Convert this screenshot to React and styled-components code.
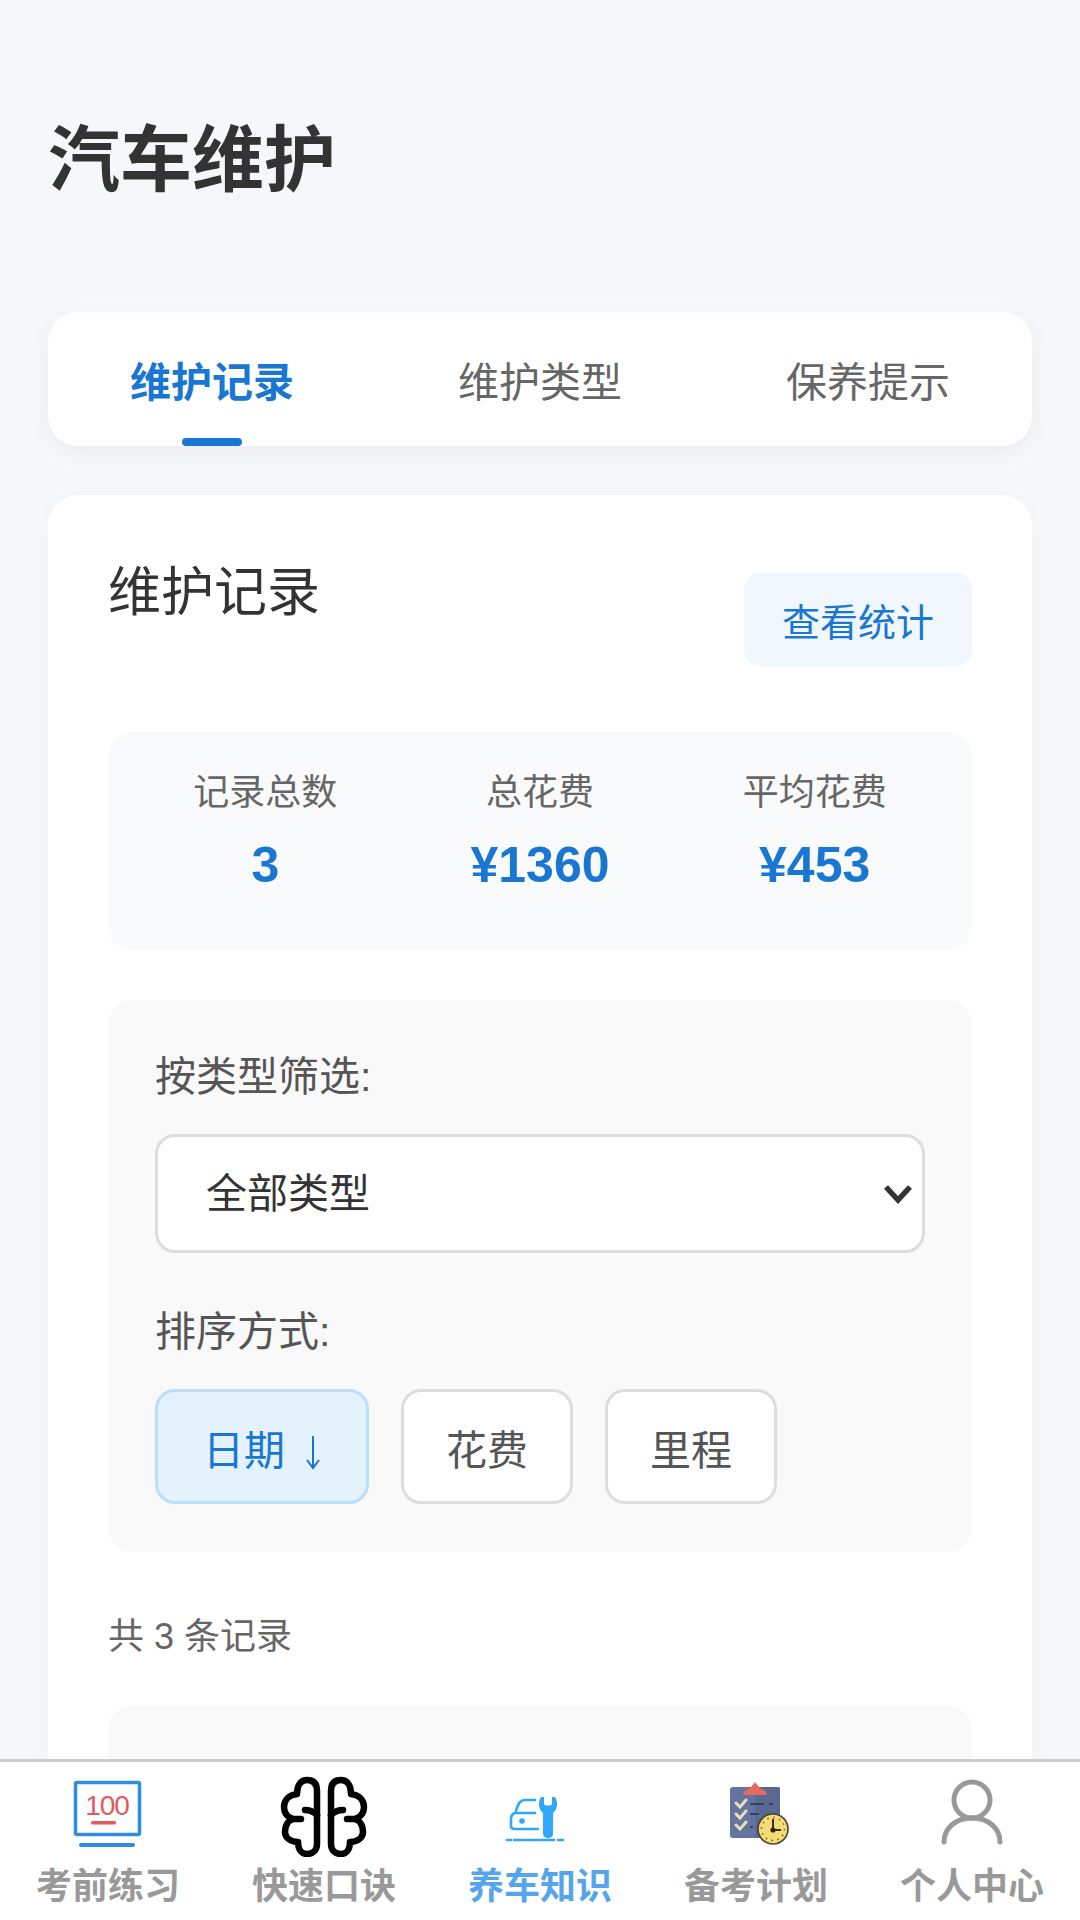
import React from 'react';
import styled, { createGlobalStyle } from 'styled-components';

const Global = createGlobalStyle`
  html, body { margin: 0; padding: 0; height: 1920px; overflow: hidden; background: #f5f7fa; }
  * { box-sizing: border-box; }
  body { font-family: "Liberation Sans", "Noto Sans CJK SC", sans-serif; }
`;

const Screen = styled.div`
  height: 1920px; display: flex; flex-direction: column; overflow: hidden; background: #f5f7fa;
`;
const Scroll = styled.main`
  flex: 1; min-height: 0; overflow: hidden; padding: 0 48px;
`;
const Title = styled.h1`
  margin: 0 0 92px; padding-top: 100px; font-size: 72px; line-height: 120px; font-weight: 700; color: #333;
`;
const Tabs = styled.nav`
  display: grid; grid-template-columns: repeat(3, 1fr); height: 134px; background: #fff;
  border-radius: 30px; box-shadow: 0 6px 24px rgba(0,0,0,.05); margin-bottom: 49px; overflow: hidden;
`;
const Tab = styled.div`
  position: relative; display: flex; align-items: center; justify-content: center; padding-bottom: 0;
  font-size: 41px; color: ${p => (p.$active ? '#1976d2' : '#666')}; font-weight: ${p => (p.$active ? 700 : 400)};
  ${p => p.$active && `&::after { content: ""; position: absolute; bottom: 0; left: 50%; transform: translateX(-50%); width: 60px; height: 8px; border-radius: 4px; background: #1976d2; }`}
`;
const Card = styled.section`
  background: #fff; border-radius: 30px; padding: 60px 60px 0; box-shadow: 0 4px 20px rgba(0,0,0,.03);
`;
const CardHeader = styled.header`
  display: flex; justify-content: space-between; align-items: flex-start; margin-bottom: 66px;
`;
const CardTitle = styled.h2`
  margin: 0; font-size: 53px; line-height: 75px; font-weight: 400; color: #333;
`;
const StatsButton = styled.button`
  margin-top: 18px; width: 228px; height: 93px; border: 0; border-radius: 16px; background: #f0f7ff;
  color: #1976d2; font: inherit; font-size: 38px;
`;
const Stats = styled.div`
  display: grid; grid-template-columns: repeat(3, 1fr); height: 218px; padding: 36px 20px 0;
  background: #f9fafb; border-radius: 24px; margin-bottom: 50px; text-align: center;
`;
const StatLabel = styled.div`
  font-size: 36px; line-height: 50px; color: #666;
`;
const StatValue = styled.div`
  margin-top: 14px; font-size: 50px; line-height: 66px; font-weight: 700; color: #1976d2;
`;
const Filter = styled.div`
  height: 552px; padding: 48px 47px; background: #f9f9f9; border-radius: 24px; margin-bottom: 60px;
`;
const FieldLabel = styled.div`
  font-size: 41px; line-height: 58px; color: #555; margin-bottom: ${p => p.$gap}px;
`;
const SelectWrap = styled.div`
  position: relative; margin-bottom: 50px;
`;
const Select = styled.select`
  display: block; width: 100%; height: 119px; padding: 0 48px; appearance: none;
  background: #fff; border: 3px solid #ddd; border-radius: 20px;
  font: inherit; font-size: 41px; color: #333;
`;
const Chevron = styled.svg`
  position: absolute; right: 12px; top: 50%; transform: translateY(-50%); width: 30px; height: 24px;
`;
const SortRow = styled.div`
  display: flex; gap: 32px;
`;
const SortButton = styled.button`
  display: flex; align-items: center; justify-content: center; gap: 20px;
  width: ${p => p.$w}px; height: 115px; border-radius: 20px; font: inherit; font-size: 41px;
  border: 3px solid ${p => (p.$active ? '#bbdefb' : '#ddd')};
  background: ${p => (p.$active ? '#e3f2fd' : '#fff')};
  color: ${p => (p.$active ? '#1976d2' : '#555')};
`;
const Arrow = styled.svg`
  width: 16px; height: 36px; margin-top: 10px;
`;
const Count = styled.div`
  font-size: 36px; line-height: 50px; color: #666; margin-bottom: 44px;
`;
const RecordCard = styled.div`
  height: 300px; background: #f9f9f9; border-radius: 24px;
`;
const BottomNav = styled.footer`
  flex: none; height: 161px; display: grid; grid-template-columns: repeat(5, 1fr);
  background: #fff; border-top: 3px solid #ccc;
`;
const NavItem = styled.div`
  display: flex; flex-direction: column; align-items: center; position: relative;
  color: ${p => (p.$active ? '#56a5ec' : '#999')};
`;
const NavIcon = styled.div`
  height: 100px; width: 100%; display: flex; align-items: center; justify-content: center;
`;
const NavLabel = styled.div`
  font-size: 36px; line-height: 50px; font-weight: 700;
`;

const ExamIcon = () => (
  <svg width="100" height="80" viewBox="0 0 100 80">
    <rect x="17.5" y="10.5" width="64" height="52" rx="1.5" fill="#fff" stroke="#2f8fdc" strokeWidth="3.5" />
    <text x="49" y="43" textAnchor="middle" fontFamily="Liberation Sans" fontSize="28" letterSpacing="-1" fill="#e05a5f">100</text>
    <rect x="33" y="49" width="25" height="3.5" rx="1.5" fill="#e05a5f" />
    <rect x="21" y="71" width="56" height="4" rx="2" fill="#2f8fdc" />
  </svg>
);
const lobe = 'M48 24C48 16 44 13 38 13C32 13 28 18 28 27C20 28 15 33 15 40C15 46 18 50 24 52C18 54 16 60 16 65C16 71 22 75 29 75C29 83 33 87 38 87C44 87 48 83 48 77Z';
const BrainIcon = () => (
  <svg width="110" height="90" viewBox="0 0 110 90" fill="none" stroke="#000" strokeWidth="6.5" strokeLinecap="round" strokeLinejoin="round">
    <g>
      <path d={lobe} />
      <path d="M36 43C41 43 45 45 48 48M24 52H32" />
    </g>
    <g transform="matrix(-1 0 0 1 110 0)">
      <path d={lobe} />
      <path d="M36 43C41 43 45 45 48 48M24 52H32" />
    </g>
  </svg>
);
const CarIcon = () => (
  <svg width="90" height="70" viewBox="0 0 90 70">
    <g fill="none" stroke="#2fa8fb" strokeWidth="2.6" strokeLinecap="round">
      <path d="M40 23H30C25 23 23 27 21 34M40 36H20C17 37 16 39 16 42V49C16 51 18 52 20 52H43" />
      <path d="M12 63H16M19 63H59M63 63H68" />
    </g>
    <circle cx="27" cy="44" r="2.8" fill="#2fa8fb" />
    <path fill="#2fa8fb" d="M46 20C43 24 43 32 48 36V56C48 60 51 61 53 61C56 61 58 60 58 56V36C63 32 63 24 60 20L57 20V27C57 29 49 29 49 27V20Z" />
  </svg>
);
const PlanIcon = () => (
  <svg width="80" height="80" viewBox="0 0 80 80">
    <rect x="14" y="15" width="50" height="51" rx="3" fill="#65739f" />
    <rect x="39" y="15" width="25" height="51" rx="2" fill="#5a6894" />
    <path d="M27 23C27 18 33 18 35 15L39 10L43 15C45 18 51 18 51 23Z" fill="#e8695d" />
    <g fill="none" stroke="#e6dfb8" strokeWidth="3" strokeLinecap="round">
      <path d="M20 31L24 35L30 28M20 42L24 46L30 39M20 53L24 57L30 50" />
    </g>
    <g stroke="#2b3350" strokeWidth="1.6">
      <path d="M34 32H48M53 32H57M34 42H43M34 55H37" />
    </g>
    <circle cx="57" cy="57" r="15" fill="#f4dc72" stroke="#45433a" strokeWidth="1.6" />
    <circle cx="57" cy="57" r="11.5" fill="none" stroke="#6b5f2e" strokeWidth="1.6" strokeDasharray="1.5 4.5" />
    <path d="M57 47V58H65" fill="none" stroke="#3a2d1a" strokeWidth="2" />
    <circle cx="57" cy="58" r="2.6" fill="#2d2314" />
  </svg>
);
const UserIcon = () => (
  <svg width="62" height="68" viewBox="0 0 62 68" fill="none" stroke="#999" strokeWidth="5" strokeLinecap="round">
    <circle cx="31" cy="22" r="18" />
    <path d="M3 64C3 50 15 40 31 40C47 40 59 50 59 64" />
  </svg>
);

const stats = [['记录总数', '3'], ['总花费', '¥1360'], ['平均花费', '¥453']];
const nav = [['考前练习', ExamIcon], ['快速口诀', BrainIcon], ['养车知识', CarIcon, true], ['备考计划', PlanIcon], ['个人中心', UserIcon]];

export default function App() {
  return (
    <Screen>
      <Global />
      <Scroll>
        <Title>汽车维护</Title>
        <Tabs>
          <Tab $active>维护记录</Tab>
          <Tab>维护类型</Tab>
          <Tab>保养提示</Tab>
        </Tabs>
        <Card>
          <CardHeader>
            <CardTitle>维护记录</CardTitle>
            <StatsButton>查看统计</StatsButton>
          </CardHeader>
          <Stats>
            {stats.map(([l, v]) => (
              <div key={l}>
                <StatLabel>{l}</StatLabel>
                <StatValue>{v}</StatValue>
              </div>
            ))}
          </Stats>
          <Filter>
            <FieldLabel $gap={28}>按类型筛选:</FieldLabel>
            <SelectWrap>
              <Select defaultValue="all"><option value="all">全部类型</option></Select>
              <Chevron viewBox="0 0 30 24" fill="none" stroke="#333" strokeWidth="5.5"><path d="M3 5L15 18L27 5" /></Chevron>
            </SelectWrap>
            <FieldLabel $gap={28}>排序方式:</FieldLabel>
            <SortRow>
              <SortButton $active $w={214}>日期<Arrow viewBox="0 0 16 36" fill="none" stroke="#1976d2" strokeWidth="2"><path d="M8 2V33M2 26L8 34L14 26" /></Arrow></SortButton>
              <SortButton $w={172}>花费</SortButton>
              <SortButton $w={172}>里程</SortButton>
            </SortRow>
          </Filter>
          <Count>共 3 条记录</Count>
          <RecordCard />
        </Card>
      </Scroll>
      <BottomNav>
        {nav.map(([label, Icon, active]) => (
          <NavItem key={label} $active={active}>
            <NavIcon><Icon /></NavIcon>
            <NavLabel>{label}</NavLabel>
          </NavItem>
        ))}
      </BottomNav>
    </Screen>
  );
}
